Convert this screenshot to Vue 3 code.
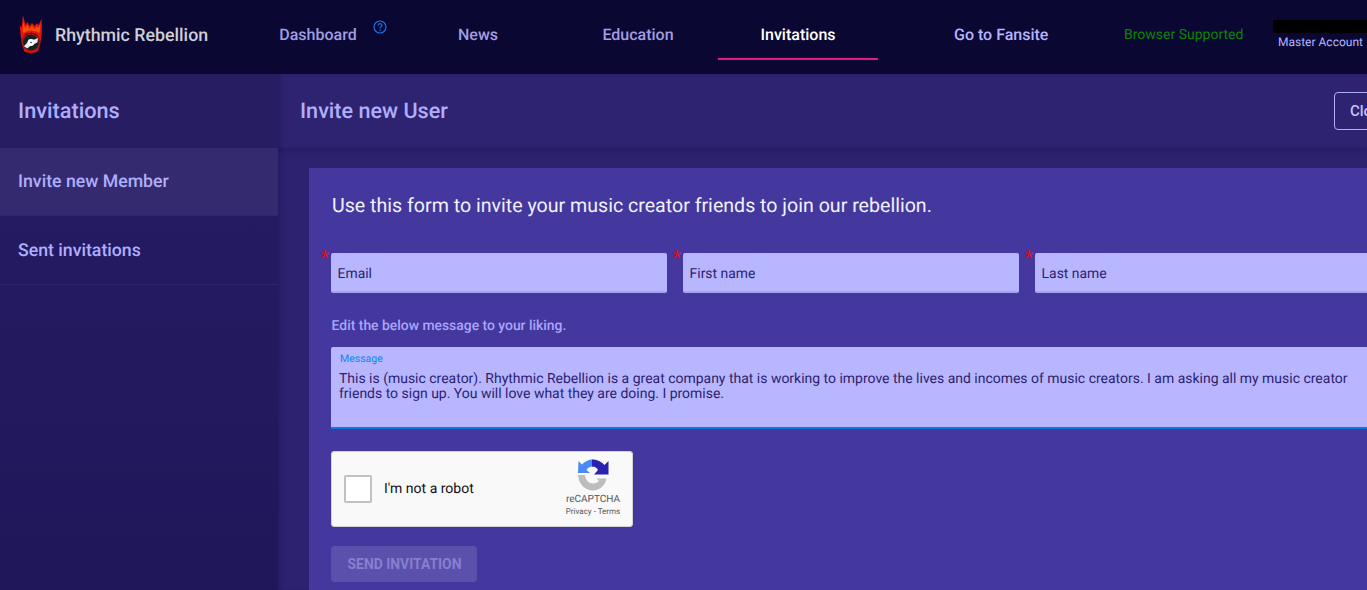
<script setup>
const tabs = [
  { label: 'Dashboard', help: true },
  { label: 'News' },
  { label: 'Education' },
  { label: 'Invitations', active: true },
]
const fields = ['Email', 'First name', 'Last name']
</script>

<template>
  <div class="page">
    <header class="topbar">
      <div class="brand">
        <svg class="logo" viewBox="0 0 24 38" width="24" height="38">
          <path d="M3.5 30 C2 24 1 16 1 10 L2.5 13 L4 0.5 L6.5 10 L8.5 7 L10.5 11 L13 8 L15.5 11 L18 8.5 L19.5 10 L22.5 4 L22.8 11 C23 18 22 25 20.5 31 L19 36 C15 38.5 8 38.5 5 36 Z" fill="#e8160c"/>
          <path d="M3.5 15 L4.5 7 L6 13 L8.5 10 L10.5 14 L13 11 L15.5 14 L18 11.5 L19.5 13 L21.5 9 L20.5 18 C15 14.5 9 14.5 4.5 18 Z" fill="#f5500c"/>
          <circle cx="12" cy="27" r="9.6" fill="#b00f16"/>
          <path d="M5.5 20.5 C9 17.5 15 17.5 18.5 20.5" stroke="#3a0c14" stroke-width="1" fill="none"/>
          <circle cx="12" cy="27.5" r="7.8" fill="#0c2623"/>
          <path d="M5 31.2 L9.2 26.4 L12.6 30 L8.2 33.6 Z" fill="#f4e8e8"/>
          <path d="M19 23 L14.8 24.8 L11.4 25 L15 29 L18.4 27.6 Z" fill="#f4e8e8"/>
          <circle cx="12" cy="27.5" r="3.4" fill="#fff"/>
          <circle cx="12" cy="27.5" r="0.8" fill="#15302c"/>
        </svg>
        <span class="brand-name">Rhythmic Rebellion</span>
      </div>
      <nav class="tabs">
        <a v-for="t in tabs" :key="t.label" class="tab" :class="{ active: t.active }">
          {{ t.label }}
          <svg v-if="t.help" class="help" viewBox="0 0 14 14" width="14" height="14">
            <circle cx="7" cy="7" r="6" fill="none" stroke="#1673e6" stroke-width="1.2"/>
            <path d="M5.1 5.5 C5.1 3 8.9 3 8.9 5.4 C8.9 6.9 7 6.9 7 8.5" fill="none" stroke="#1673e6" stroke-width="1.2"/>
            <circle cx="7" cy="10.3" r=".8" fill="#1673e6"/>
          </svg>
        </a>
      </nav>
      <a class="fansite">Go to Fansite</a>
      <span class="browser">Browser Supported</span>
      <div class="account">
        <div class="redacted"></div>
        <div class="account-label">Master Account</div>
      </div>
    </header>

    <div class="body">
      <aside class="sidebar">
        <h2 class="side-title">Invitations</h2>
        <a class="side-item current">Invite new Member</a>
        <a class="side-item">Sent invitations</a>
      </aside>

      <main class="main">
        <div class="main-head">
          <h1>Invite new User</h1>
          <button class="close">Close</button>
        </div>
        <section class="panel">
          <p class="lead">Use this form to invite your music creator friends to join our rebellion.</p>
          <div class="fields">
            <div v-for="f in fields" :key="f" class="field">
              <span class="star">*</span>
              {{ f }}
            </div>
          </div>
          <p class="hint">Edit the below message to your liking.</p>
          <div class="message">
            <div class="msg-label">Message</div>
            <div class="msg-text">This is (music creator). Rhythmic Rebellion is a great company that is working to improve the lives and incomes of music creators. I am asking all my music creator friends to sign up. You will love what they are doing. I promise.</div>
          </div>
          <div class="captcha">
            <span class="check"></span>
            <span class="robot">I'm not a robot</span>
            <div class="rc">
              <svg class="rc-icon" viewBox="0 0 32 32" width="32" height="32">
                <path d="M16 0.5 C11.5 0.5 7.5 2.5 5 5.5 L1.5 2 L1 14 L13 14 L9.5 11 C10.5 9 13 7.5 16 7.5 Z" fill="#4a8af4"/>
                <path d="M15 0.5 L15 7.5 C18 7.5 20 9 21 11 L17 15.5 L31.5 15.5 L31.5 2 L27.5 6 C24.5 2.5 20 0.5 15 0.5 Z" fill="#2a22b0"/>
                <path d="M1 16 L8 16 C8.5 21 12 24.5 16 24.5 C18.5 24.5 20.5 23.5 22 22 L19.5 19.5 L29.5 19.5 L28 24 C25.5 28.5 21 31.5 16 31.5 C8 31.5 1.5 25 1 16 Z" fill="#bdbdbd"/>
              </svg>
              <div class="rc-name">reCAPTCHA</div>
              <div class="rc-links">Privacy - Terms</div>
            </div>
          </div>
          <button class="send">SEND INVITATION</button>
        </section>
      </main>
    </div>
  </div>
</template>

<style scoped>
.page {
  width: 1367px;
  height: 590px;
  overflow: hidden;
  font-family: Roboto, "Liberation Sans", sans-serif;
  text-rendering: geometricPrecision;
  background: #2c2270;
  color: #b7b4ff;
}
.topbar {
  height: 74px;
  display: flex;
  align-items: stretch;
  background: #0a0833;
  position: relative;
}
.brand {
  width: 238px;
  flex: none;
  display: flex;
  align-items: center;
  padding-left: 19px;
  box-sizing: border-box;
}
.logo { flex: none; margin-top: -6px; width: 24px; height: 38px; }
.brand-name {
  margin-left: 12px;
  font-size: 17.8px;
  font-weight: 500;
  color: #cfcfd6;
  white-space: nowrap;
  margin-top: -4px;
}
.tabs { display: flex; }
.tab {
  position: relative;
  width: 160px;
  height: 60px;
  box-sizing: border-box;
  display: flex;
  align-items: center;
  justify-content: center;
  font-size: 16px;
  font-weight: 500;
  color: #a29ee0;
  padding-top: 8px;
}
.tab.active {
  color: #fff;
  border-bottom: 2px solid #e6158c;
  padding-top: 10px;
}
.help { position: absolute; left: 135px; top: 20px; }
.fansite {
  margin-left: 76px;
  width: 95px;
  flex: none;
  font-size: 16px;
  font-weight: 500;
  color: #b7b4ff;
  line-height: 69px;
  white-space: nowrap;
}
.browser {
  margin-left: 75px;
  width: 149px;
  flex: none;
  font-size: 14px;
  color: #0a8500;
  line-height: 71px;
  white-space: nowrap;
}
.account { flex: 1; padding-top: 20px; min-width: 0; }
.redacted { height: 13px; background: #000; }
.account-label {
  margin: 2px 0 0 5px;
  font-size: 12px;
  line-height: 14px;
  color: #b7b4ff;
  white-space: nowrap;
}
.body { display: flex; height: 516px; }
.sidebar {
  width: 278px;
  flex: none;
  background: linear-gradient(180deg, #251c65 0%, #20175a 100%);
  position: relative;
}
.side-title {
  margin: 0;
  height: 74px;
  padding-left: 18px;
  background: #261d63;
  line-height: 76px;
  font-size: 21.7px;
  font-weight: 500;
  color: #b0aefc;
}
.side-item {
  display: block;
  height: 68px;
  padding-left: 18px;
  line-height: 70px;
  font-size: 17.7px;
  font-weight: 500;
  color: #b0aefc;
  border-bottom: 1px solid #2f2570;
}
.side-item.current { background: #332a6f; height: 67px; line-height: 68px; }
.main {
  flex: 1;
  min-width: 0;
  overflow: hidden;
  box-shadow: inset 5px 0 5px -3px rgba(20, 14, 70, .4);
}
.main-head {
  height: 74px;
  padding-left: 22px;
  display: flex;
  align-items: center;
  background: #2e2370;
  box-shadow: 0 2px 6px rgba(20, 14, 70, .35), inset 5px 0 5px -3px rgba(20, 14, 70, .4);
  position: relative;
}
.main-head h1 {
  margin: 0;
  font-size: 21.6px;
  font-weight: 500;
  color: #b0aefc;
}
.close {
  margin-left: auto;
  margin-right: -41px;
  width: 74px;
  height: 38px;
  box-sizing: border-box;
  background: transparent;
  border: 1px solid #b0aefc;
  border-radius: 4px;
  font: 500 15px Roboto, sans-serif;
  color: #c4c2ff;
  text-align: left;
  padding-left: 15px;
}
.panel {
  margin: 20px 0 0 31px;
  width: 1100px;
  height: 500px;
  box-sizing: border-box;
  padding: 0 22px;
  background: #44389f;
}
.lead {
  margin: 0;
  padding: 25px 0 0 1px;
  font-size: 19.6px;
  line-height: 26px;
  color: #f2f1ff;
  white-space: nowrap;
}
.fields { display: flex; gap: 16px; margin-top: 34px; }
.field {
  position: relative;
  width: 336px;
  height: 40px;
  flex: none;
  box-sizing: border-box;
  padding-left: 6.6px;
  line-height: 42px;
  font-size: 13.9px;
  color: #2c2270;
  background: #b8b6ff;
  border-bottom: 2px solid #a5a2f0;
  border-radius: 2px;
}
.star {
  position: absolute;
  left: -10px;
  top: -4px;
  font-size: 18px;
  line-height: 18px;
  color: #f00;
}
.hint {
  margin: 25px 0 0 0.6px;
  font-size: 13.9px;
  font-weight: 500;
  line-height: 16px;
  color: #a9a6fb;
}
.message {
  margin-top: 13px;
  width: 1060px;
  height: 82px;
  box-sizing: border-box;
  padding: 6px 8px 0;
  background: #b8b6ff;
  border-bottom: 2px solid #0f78e0;
  border-radius: 2px 2px 0 0;
}
.msg-label {
  font-size: 10.5px;
  line-height: 12px;
  color: #0d84ea;
  padding-left: 1px;
}
.msg-text {
  width: 1018px;
  margin-top: 7px;
  font-size: 13.98px;
  line-height: 15px;
  color: #2c2270;
}
.captcha {
  margin-top: 22px;
  width: 302px;
  height: 76px;
  box-sizing: border-box;
  display: flex;
  align-items: center;
  padding-left: 12px;
  background: #f9f9f9;
  border: 1px solid #d3d3d3;
  border-radius: 3px;
  position: relative;
}
.check {
  width: 28px;
  height: 28px;
  box-sizing: border-box;
  background: #fff;
  border: 2px solid #c1c1c1;
  border-radius: 2px;
}
.robot {
  margin-left: 12px;
  font-size: 14px;
  color: #111;
}
.rc {
  position: absolute;
  right: 11px;
  top: 7px;
  width: 56px;
  text-align: center;
}
.rc-icon { display: block; margin: 0 auto; }
.rc-name {
  margin-top: 3px;
  font-size: 10px;
  line-height: 12px;
  color: #555;
  white-space: nowrap;
}
.rc-links {
  font-size: 8px;
  line-height: 11px;
  color: #555;
  white-space: nowrap;
}
.send {
  display: block;
  margin-top: 19px;
  width: 146px;
  height: 36px;
  padding: 0 0 0 1px;
  background: #5b50ab;
  border: 0;
  border-radius: 4px;
  font: 700 13.9px Roboto, sans-serif;
  color: #8680cf;
}
</style>
